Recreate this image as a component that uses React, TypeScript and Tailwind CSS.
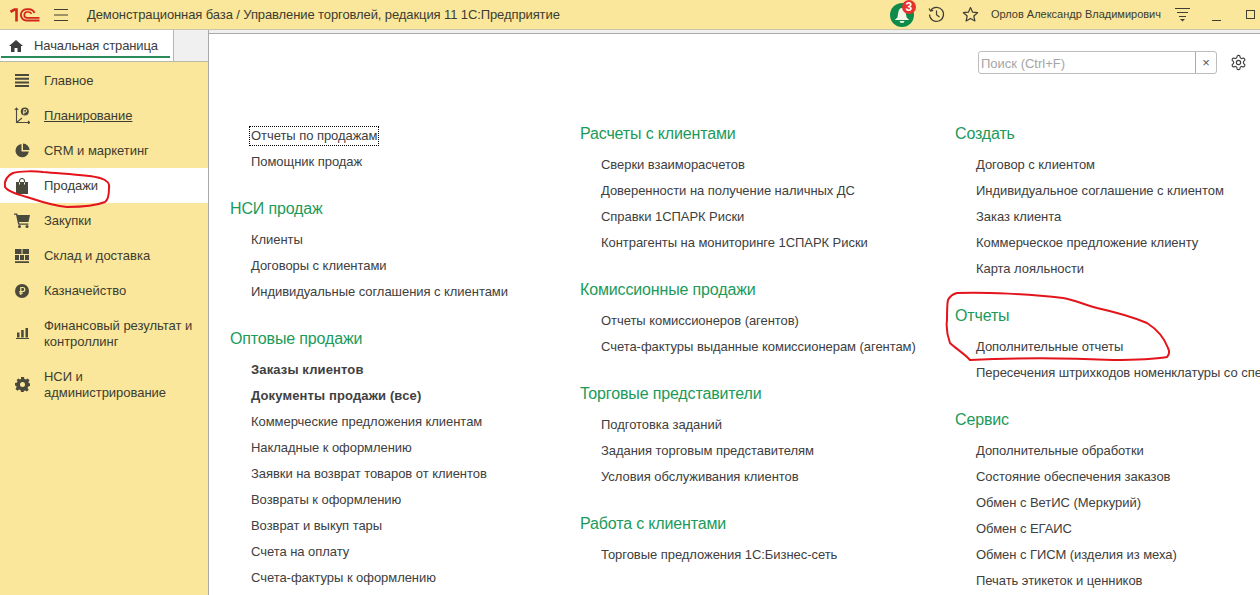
import React from "react";

const bar = "#fae79b";
const Ink = "#4a4a3c";

function Logo() {
  return (
    <svg width="30" height="14" viewBox="0 0 30 14" fill="none">
      <path d="M0.500 3.800 L4.500 1.500 H6.500 V13.500" stroke="#d2281c" strokeWidth="2.600" />
      <path d="M29.500 12.500 H16.500 A5.500 5.500 0 0 1 16.500 1.200 H19 A6 6 0 0 1 24.500 5" stroke="#d2281c" strokeWidth="1.900" />
      <path d="M29.500 9.800 H16.500 A3 3 0 0 1 16.500 4 H19 A3 3 0 0 1 21.500 5.800" stroke="#d2281c" strokeWidth="1.700" />
    </svg>
  );
}

const Menu = () => (
  <svg width="14" height="12" viewBox="0 0 14 12" stroke="#3f3f34" strokeWidth="1">
    <path d="M0 0.500h14M0 6h14M0 11.500h14" />
  </svg>
);

const Bell = () => (
  <div className="relative w-[24px] h-[24px] rounded-full bg-[#0e8a4a] flex items-center justify-center">
    <svg width="18" height="18" viewBox="0 0 18 18" fill="#f3f7ea">
      <path d="M9 2c2.200 0 3.300 1.800 3.600 4l1 5.500 2.600 2.500H1.800l2.600-2.500 1-5.500C5.700 3.800 6.800 2 9 2z" />
      <path d="M6.500 15h5a2.500 2 0 0 1-5 0z" />
    </svg>
    <span className="absolute -top-[3px] -right-[2px] w-[14px] h-[14px] rounded-full bg-[#e8302c] text-white text-[12px] leading-[14px] font-bold text-center">3</span>
  </div>
);

const History = () => (
  <svg width="17" height="17" viewBox="0 0 17 17" fill="none" stroke="#3f3f34" strokeWidth="1.200">
    <path d="M2.600 4.600A7 7 0 1 1 1.500 8.500" />
    <path d="M1 2.500 L2.500 5 L5.200 4.300" />
    <path d="M8.500 4.500V8.700L11.500 11" />
  </svg>
);

const Star = () => (
  <svg width="17" height="17" viewBox="0 0 17 17" fill="none" stroke="#3f3f34" strokeWidth="1.200">
    <path d="M8.500 1.500l2.100 4.700 5 .5-3.800 3.300 1.100 5L8.500 12.400 4.100 15l1.100-5L1.400 6.700l5-.5z" strokeLinejoin="round" />
  </svg>
);

const Funnel = () => (
  <svg width="15" height="14" viewBox="0 0 15 14" stroke="#3f3f34" strokeWidth="1.100" fill="none">
    <path d="M0 0.500h15M2 4.500h11M4 8.500h7" />
    <path d="M5 11h5l-2.500 2.500z" fill="#3f3f34" stroke="none" />
  </svg>
);

const Home = () => (
  <svg width="14" height="12" viewBox="0 0 14 12" fill="#3d3d3d">
    <path d="M7 0 L14 6 H12 V12 H8.500 V8 H5.500 V12 H2 V6 H0z" />
  </svg>
);

const icons: Record<string, React.ReactNode> = {
  main: (
    <svg width="14" height="13" viewBox="0 0 14 13" fill={Ink}>
      <path d="M0 0h14v2H0zM0 3.700h14v2H0zM0 7.400h14v2H0zM0 11h14v2H0z" />
    </svg>
  ),
  plan: (
    <svg width="16" height="17" viewBox="0 0 16 17" fill="none" stroke={Ink} strokeWidth="1.100">
      <path d="M2.500 1V15.500H16M2.500 15.500l5.500-4.500M0.800 3 2.500 1l1.700 2M14 13.800l1.700 1.700L14 17" />
      <circle cx="10.800" cy="4.500" r="4" fill={Ink} stroke="none" />
      <path d="M9.800 7.500V2.500h1.500a1.300 1.300 0 0 1 0 2.700H8.800" stroke={bar} strokeWidth="1" />
    </svg>
  ),
  crm: (
    <svg width="15" height="15" viewBox="0 0 15 15" fill={Ink}>
      <path d="M6.500 1A6.700 6.700 0 1 0 13.800 8.500H6.500z" />
      <path d="M8 0.500A6.700 6.700 0 0 1 14.500 7H8z" />
    </svg>
  ),
  sales: (
    <svg width="12" height="16" viewBox="0 0 12 16" fill={Ink}>
      <path d="M0 4h12v12H0z" />
      <path d="M3.500 6.500V3a2.500 2.500 0 0 1 5 0v3.500" fill="none" stroke={Ink} strokeWidth="1.100" />
      <path d="M3 4.500h1v2H3zM8 4.500h1v2H8z" fill="#ffffff" />
    </svg>
  ),
  buy: (
    <svg width="16" height="15" viewBox="0 0 16 15" fill={Ink}>
      <path d="M0 0.500h3.200l.5 1.500H16l-1.500 7H5l.4 1.500h9v1.300H4.200L2 1.800H0z" />
      <circle cx="5.500" cy="13.500" r="1.500" />
      <circle cx="13" cy="13.500" r="1.500" />
    </svg>
  ),
  stock: (
    <svg width="14" height="14" viewBox="0 0 14 14" fill={Ink}>
      <path d="M0 0h6.500v5H0zM7.500 0H14v5H7.500zM0 6h4v5H0zM5 6h4v5H5zM10 6h4v5h-4zM0 12.300h14V14H0z" />
    </svg>
  ),
  cash: (
    <svg width="14" height="14" viewBox="0 0 14 14">
      <circle cx="7" cy="7" r="7" fill={Ink} />
      <path d="M5.800 11V3.500h2a2 2 0 0 1 0 4H4.300M4.300 9.200h3.500" fill="none" stroke={bar} strokeWidth="1.200" />
    </svg>
  ),
  fin: (
    <svg width="13" height="11" viewBox="0 0 13 11" fill={Ink}>
      <path d="M1 4.500h2.500V9.500H1zM5.200 2H7.700v7.500H5.200zM9.500 0H12v9.500H9.500zM0 10h13v1H0z" />
    </svg>
  ),
  nsi: (
    <svg width="15" height="15" viewBox="0 0 15 15">
      <path
        fill={Ink}
        fillRule="evenodd"
        d="M6 0h3l.4 2 1.500.6L12.700 1.500l1.800 1.800-1.100 1.800.6 1.500L15 6v3l-1.800.4-.6 1.500 1.100 1.800-1.800 1.800-1.800-1.100-1.500.6L9 15H6l-.4-1.800-1.500-.6-1.800 1.100-1.800-1.800 1.100-1.800-.6-1.500L0 9V6l2-.4.6-1.500L1.500 3.300l1.800-1.800 1.800 1.100L6 2zM7.500 5a2.500 2.500 0 1 0 0 5 2.500 2.500 0 0 0 0-5z"
      />
    </svg>
  ),
};

const nav = [
  { k: "main", t: ["Главное"] },
  { k: "plan", t: ["Планирование"], u: true },
  { k: "crm", t: ["CRM и маркетинг"] },
  { k: "sales", t: ["Продажи"], a: true },
  { k: "buy", t: ["Закупки"] },
  { k: "stock", t: ["Склад и доставка"] },
  { k: "cash", t: ["Казначейство"] },
  { k: "fin", t: ["Финансовый результат и", "контроллинг"] },
  { k: "nsi", t: ["НСИ и", "администрирование"] },
];

type Sec = { h?: string; items: { t: string; b?: boolean; f?: boolean }[] };
const I = (t: string, b = false, f = false) => ({ t, b, f });

const col1: Sec[] = [
  { items: [I("Отчеты по продажам", false, true), I("Помощник продаж")] },
  { h: "НСИ продаж", items: [I("Клиенты"), I("Договоры с клиентами"), I("Индивидуальные соглашения с клиентами")] },
  {
    h: "Оптовые продажи",
    items: [
      I("Заказы клиентов", true),
      I("Документы продажи (все)", true),
      I("Коммерческие предложения клиентам"),
      I("Накладные к оформлению"),
      I("Заявки на возврат товаров от клиентов"),
      I("Возвраты к оформлению"),
      I("Возврат и выкуп тары"),
      I("Счета на оплату"),
      I("Счета-фактуры к оформлению"),
    ],
  },
];
const col2: Sec[] = [
  {
    h: "Расчеты с клиентами",
    items: [
      I("Сверки взаиморасчетов"),
      I("Доверенности на получение наличных ДС"),
      I("Справки 1СПАРК Риски"),
      I("Контрагенты на мониторинге 1СПАРК Риски"),
    ],
  },
  { h: "Комиссионные продажи", items: [I("Отчеты комиссионеров (агентов)"), I("Счета-фактуры выданные комиссионерам (агентам)")] },
  {
    h: "Торговые представители",
    items: [I("Подготовка заданий"), I("Задания торговым представителям"), I("Условия обслуживания клиентов")],
  },
  { h: "Работа с клиентами", items: [I("Торговые предложения 1С:Бизнес-сеть")] },
];
const col3: Sec[] = [
  {
    h: "Создать",
    items: [
      I("Договор с клиентом"),
      I("Индивидуальное соглашение с клиентом"),
      I("Заказ клиента"),
      I("Коммерческое предложение клиенту"),
      I("Карта лояльности"),
    ],
  },
  { h: "Отчеты", items: [I("Дополнительные отчеты"), I("Пересечения штрихкодов номенклатуры со спецификациями")] },
  {
    h: "Сервис",
    items: [
      I("Дополнительные обработки"),
      I("Состояние обеспечения заказов"),
      I("Обмен с ВетИС (Меркурий)"),
      I("Обмен с ЕГАИС"),
      I("Обмен с ГИСМ (изделия из меха)"),
      I("Печать этикеток и ценников"),
    ],
  },
];

function Column({ secs, className }: { secs: Sec[]; className: string }) {
  return (
    <div className={"flex flex-col gap-[21px] shrink-0 " + className}>
      {secs.map((s, i) => (
        <div key={i} className="flex flex-col">
          {s.h && <div className="h-[31px] leading-[26px] text-[16px] tracking-[-0.15px] text-[#1b9a59]">{s.h}</div>}
          {s.items.map((it) => (
            <div key={it.t} className="h-[26px] flex items-center pl-[21px] whitespace-nowrap">
              <span
                className={
                  "text-[13px] leading-[16px] text-[#404040] " +
                  (it.b ? "font-bold tracking-[0.13px] " : "tracking-[-0.05px] ") +
                  (it.f ? "outline-1 outline-offset-1 outline-dotted outline-black" : "")
                }
              >
                {it.t}
              </span>
            </div>
          ))}
        </div>
      ))}
    </div>
  );
}

export default function App() {
  return (
    <div className="relative w-[1260px] h-[595px] overflow-hidden bg-white flex flex-col font-['Liberation_Sans',Arial,sans-serif] text-[#3c3c3c]">
      <header className="h-[29px] shrink-0 bg-[#fae79b] flex items-center">
        <div className="w-[54px] pl-[10px] flex items-center"><Logo /></div>
        <div className="w-[33px] flex items-center"><Menu /></div>
        <div className="text-[13px] tracking-[-0.1px] whitespace-nowrap text-[#3c3c30]">
          Демонстрационная база / Управление торговлей, редакция 11 1С:Предприятие
        </div>
        <div className="ml-auto flex items-center pr-[5px]">
          <Bell />
          <div className="ml-[14px] flex"><History /></div>
          <div className="ml-[17px] flex"><Star /></div>
          <div className="ml-[12px] text-[11px] text-[#3c3c30] whitespace-nowrap">Орлов Александр Владимирович</div>
          <div className="ml-[14px] flex"><Funnel /></div>
          <div className="ml-[22px] w-[9px] h-[12px] border-b border-[#3f3f34]" />
          <div className="ml-[25px] w-[9px] h-[9px] border border-[#3f3f34]" />
        </div>
      </header>

      <div className="flex-1 flex min-h-0 bg-[#f0f0f0] border-t border-[#c9c5a8]">
        <aside className="w-[209px] shrink-0 flex flex-col border-r border-[#a9a9a9]">
          <div className="h-[31px] shrink-0 flex">
            <div className="w-[174px] bg-white border-r border-[#b5b5b5] pl-[1px] pr-[3px] flex flex-col">
              <div className="flex-1 flex items-center pt-[5px] pl-[8px] gap-[11px]">
                <Home />
                <span className="text-[13px] tracking-[-0.1px] text-[#3c3c3c]">Начальная страница</span>
              </div>
              <div className="h-[2px] mb-[3px] bg-[#2b8a5c]" />
            </div>
            <div className="flex-1 bg-[#f0f0f0]" />
          </div>
          <nav className="flex-1 bg-[#fae79b] flex flex-col border-t border-[#b9b9a8] pt-[1px]">
            {nav.map((n) => (
              <div
                key={n.k}
                className={
                  "flex items-center shrink-0 " +
                  (n.t.length > 1 ? "h-[51px] " : "h-[35px] ") +
                  (n.a ? "bg-white" : "")
                }
              >
                <div className="w-[44px] shrink-0 flex items-center justify-center">{icons[n.k]}</div>
                <div className="text-[13px] leading-[16px] tracking-[-0.03px] text-[#3c3c30]">
                  {n.t.map((l) => (
                    <div key={l} className={"whitespace-nowrap " + (n.u ? "underline" : "")}>{l}</div>
                  ))}
                </div>
              </div>
            ))}
          </nav>
        </aside>

        <main className="flex-1 min-w-0 flex flex-col">
          <div className="h-[4px] shrink-0 bg-[#f0f0f0] border-b border-[#a9a9a9]" />
          <div className="flex-1 bg-white min-h-0 overflow-hidden flex flex-col">
            <div className="h-[87px] shrink-0 flex justify-end items-start pt-[17px] pr-[13px]">
              <div className="w-[239px] h-[23px] flex border border-[#bdbdbd] rounded-[3px] bg-white">
                <div className="flex-1 pl-[2px] text-[13px] leading-[23px] text-[#a5a5a5]">Поиск (Ctrl+F)</div>
                <div className="w-[21px] border-l border-[#a9a9a9] text-[13px] leading-[21px] text-center text-[#555]">×</div>
              </div>
              <div className="ml-[13px] mt-[3px]">
                <svg width="17" height="17" viewBox="0 0 24 24" fill="none" stroke="#3f3f3f" strokeWidth="1.600">
                  <path d="M12.220 2h-.440a2 2 0 0 0-2 2v.180a2 2 0 0 1-1 1.730l-.430.250a2 2 0 0 1-2 0l-.150-.080a2 2 0 0 0-2.730.730l-.220.380a2 2 0 0 0 .730 2.730l.150.100a2 2 0 0 1 1 1.720v.510a2 2 0 0 1-1 1.740l-.150.090a2 2 0 0 0-.730 2.730l.220.380a2 2 0 0 0 2.730.730l.150-.080a2 2 0 0 1 2 0l.430.250a2 2 0 0 1 1 1.730V20a2 2 0 0 0 2 2h.440a2 2 0 0 0 2-2v-.180a2 2 0 0 1 1-1.730l.430-.250a2 2 0 0 1 2 0l.150.080a2 2 0 0 0 2.730-.730l.220-.390a2 2 0 0 0-.730-2.730l-.150-.080a2 2 0 0 1-1-1.740v-.500a2 2 0 0 1 1-1.740l.150-.090a2 2 0 0 0 .730-2.730l-.220-.380a2 2 0 0 0-2.730-.730l-.150.080a2 2 0 0 1-2 0l-.430-.250a2 2 0 0 1-1-1.730V4a2 2 0 0 0-2-2z" />
                  <circle cx="12" cy="12" r="3" />
                </svg>
              </div>
            </div>
            <div className="flex pl-[21px]">
              <Column secs={col1} className="w-[350px] pt-[2px]" />
              <Column secs={col2} className="w-[375px]" />
              <Column secs={col3} className="w-[400px]" />
            </div>
          </div>
        </main>
      </div>

      <svg className="absolute left-0 top-0 pointer-events-none" width="1260" height="595" fill="none" stroke="#e3141c" strokeWidth="2">
        <path d="M13 173 C 20 171, 35 171, 43 172 C 65 174, 90 175, 100 178 C 107 180, 110 184, 109 188 C 109 195, 108 200, 105 202 C 95 206, 80 207, 67 207 C 55 206, 42 202, 30 198 C 20 195, 8 192, 5 187 C 4 180, 8 175, 13 173 Z" />
        <path d="M957 293 C 985 292, 1030 294, 1063 298 C 1075 300, 1085 305, 1097 308 C 1115 312, 1135 318, 1147 323 C 1158 330, 1165 340, 1168 348 C 1170 352, 1169 355, 1167 357 C 1150 360, 1130 360, 1113 360 C 1070 358, 1010 358, 970 360 C 965 354, 955 348, 950 343 C 947 335, 946 328, 947 320 C 947 310, 947 304, 948 300 C 950 296, 953 294, 957 293 Z" />
      </svg>
    </div>
  );
}
